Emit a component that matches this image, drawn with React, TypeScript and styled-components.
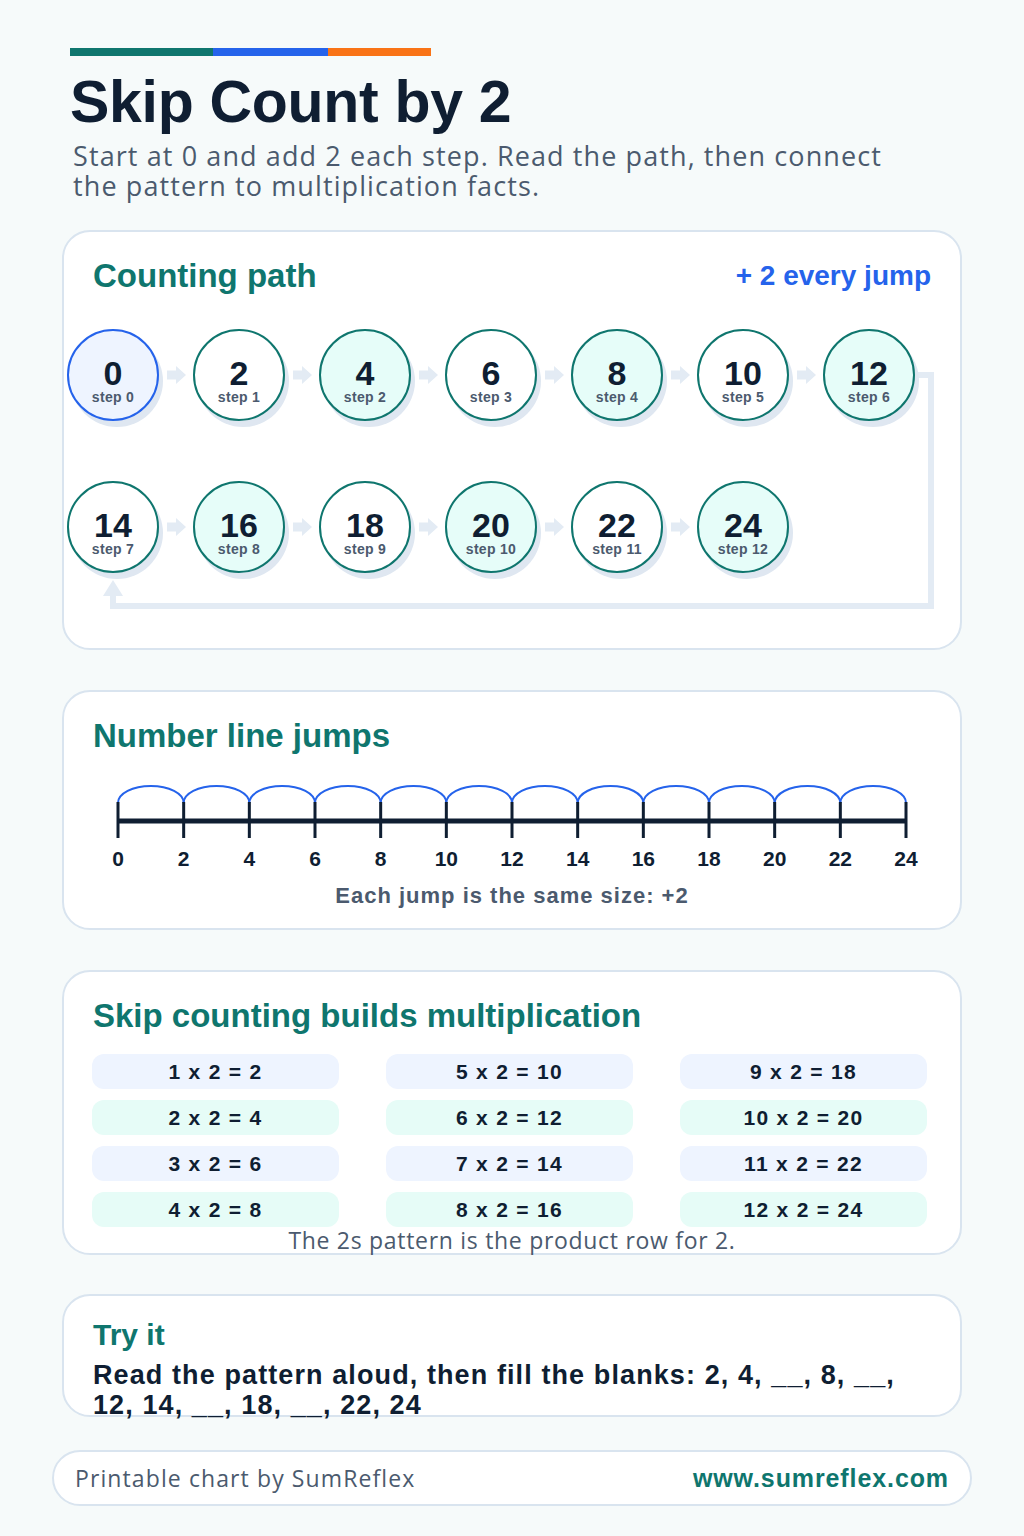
import React from "react";
import styled, { createGlobalStyle } from "styled-components";

const GlobalStyle = createGlobalStyle`
  html, body { margin: 0; padding: 0; background: #f6fafa; }
  body { font-family: "Liberation Sans", Arial, sans-serif; color: #0f1e32; }
  * { box-sizing: border-box; }
`;

const TEAL = "#0f766e";
const BLUE = "#2563eb";
const DARK = "#0f1e32";
const GRAY = "#4b5a6e";
const SOFT = "#e3ebf4";
const BORDER = "#d9e4ef";
const GEO = `"Open Sans", "Noto Sans", sans-serif`;

const Page = styled.div`
  width: 1024px;
  min-height: 1536px;
  padding: 48px 62px 30px;
  display: flex;
  flex-direction: column;
`;

const Header = styled.header`
  padding-left: 8px;
  display: flex;
  flex-direction: column;
`;

const ColorBar = styled.div`
  display: flex;
  height: 8px;
`;

const BarPart = styled.div<{ $w: number; $c: string }>`
  width: ${(p) => p.$w}px;
  background: ${(p) => p.$c};
`;

const Title = styled.h1`
  margin: 12px 0 0;
  font-family: "Liberation Sans", Arial, sans-serif;
  font-weight: 700;
  font-size: 59px;
  line-height: 68px;
  color: ${DARK};
  letter-spacing: -0.3px;
`;

const Subtitle = styled.p`
  margin: 5px 0 0 3px;
  width: 830px;
  font-family: ${GEO};
  font-size: 27px;
  letter-spacing: 1.1px;
  line-height: 30px;
  color: ${GRAY};
`;

const Card = styled.section<{ $h: number; $mt: number }>`
  margin-top: ${(p) => p.$mt}px;
  height: ${(p) => p.$h}px;
  background: #ffffff;
  border: 2px solid ${BORDER};
  border-radius: 28px;
  padding: 22px 0 0;
  display: flex;
  flex-direction: column;
`;

const CardHead = styled.div`
  display: flex;
  justify-content: space-between;
  align-items: center;
  padding: 0 29px;
  height: 44px;
`;

const CardTitle = styled.h2<{ $size?: number }>`
  margin: 0;
  font-family: "Liberation Sans", Arial, sans-serif;
  font-weight: 700;
  font-size: ${(p) => p.$size ?? 33}px;
  color: ${TEAL};
`;

const JumpNote = styled.span`
  font-weight: 700;
  font-size: 28px;
  color: ${BLUE};
`;

/* Counting path */
const PathArea = styled.div`
  position: relative;
  margin-top: 31px;
  padding-left: 3px;
  display: flex;
  flex-direction: column;
  gap: 60px;
`;

const PathLines = styled.svg`
  position: absolute;
  left: 0;
  top: 0;
  pointer-events: none;
`;

const CircleRow = styled.div`
  position: relative;
  display: flex;
  align-items: center;
`;

const Bubble = styled.div<{ $kind: "start" | "mint" | "plain" }>`
  width: 92px;
  height: 92px;
  flex: none;
  border-radius: 50%;
  border: 2px solid ${(p) => (p.$kind === "start" ? BLUE : TEAL)};
  background: ${(p) =>
    p.$kind === "start" ? "#eef4ff" : p.$kind === "mint" ? "#e6fdf9" : "#ffffff"};
  box-shadow: 4px 6px 0 #dfe7f1;
  display: flex;
  flex-direction: column;
  align-items: center;
  justify-content: center;
  padding-top: 10px;
`;

const BubbleNum = styled.span`
  font-weight: 700;
  font-size: 34px;
  line-height: 34px;
  color: ${DARK};
`;

const BubbleStep = styled.span`
  font-weight: 700;
  font-size: 14px;
  letter-spacing: 0.3px;
  line-height: 14px;
  color: ${GRAY};
`;

const ArrowSlot = styled.div`
  width: 34px;
  flex: none;
  display: flex;
  justify-content: center;
  align-items: center;
`;

/* Number line */
const LineWrap = styled.div`
  margin-top: 22px;
  display: flex;
  justify-content: flex-start;
`;

const Caption = styled.p<{ $geo?: boolean; $mt: number }>`
  margin: ${(p) => p.$mt}px 0 0;
  text-align: center;
  font-family: ${(p) => (p.$geo ? GEO : `"Liberation Sans", Arial, sans-serif`)};
  font-weight: ${(p) => (p.$geo ? 400 : 700)};
  font-size: ${(p) => (p.$geo ? 23 : 22)}px;
  letter-spacing: ${(p) => (p.$geo ? 0.7 : 1)}px;
  line-height: 26px;
  color: ${GRAY};
`;

/* Multiplication */
const FactGrid = styled.div`
  margin: 16px 33px 0 28px;
  display: grid;
  grid-template-columns: repeat(3, 247px);
  grid-auto-flow: column;
  grid-template-rows: repeat(4, 35px);
  column-gap: 47px;
  row-gap: 11px;
`;

const Fact = styled.div<{ $alt: boolean }>`
  border-radius: 12px;
  background: ${(p) => (p.$alt ? "#e6fcf7" : "#eef4ff")};
  display: flex;
  align-items: center;
  justify-content: center;
  font-weight: 700;
  font-size: 21px;
  letter-spacing: 1.3px;
  color: ${DARK};
`;

/* Try it */
const TryText = styled.p`
  margin: 8px 0 0;
  padding: 0 29px;
  font-weight: 700;
  font-size: 27px;
  letter-spacing: 1.1px;
  line-height: 30px;
  color: ${DARK};
`;

const Footer = styled.footer`
  margin: 33px -10px 0;
  height: 56px;
  border: 2px solid ${BORDER};
  border-radius: 28px;
  background: #ffffff;
  display: flex;
  align-items: center;
  justify-content: space-between;
  padding: 0 21px 0 21px;
`;

const FooterNote = styled.span`
  font-family: ${GEO};
  font-size: 23px;
  letter-spacing: 1.1px;
  color: ${GRAY};
`;

const FooterLink = styled.span`
  font-weight: 700;
  font-size: 25px;
  letter-spacing: 0.9px;
  color: ${TEAL};
`;

const StepArrow = () => (
  <svg width="20" height="20" viewBox="0 0 20 20">
    <rect x="1" y="5.5" width="10" height="9" fill={SOFT} />
    <polygon points="10,1 20,10 10,19" fill={SOFT} />
  </svg>
);

type Step = { n: number; i: number };
const steps: Step[] = Array.from({ length: 13 }, (_, i) => ({ n: i * 2, i }));

const kindOf = (i: number): "start" | "mint" | "plain" =>
  i === 0 ? "start" : i % 2 === 0 ? "mint" : "plain";

const Row = ({ items }: { items: Step[] }) => (
  <CircleRow>
    {items.map((s, k) => (
      <React.Fragment key={s.i}>
        {k > 0 && (
          <ArrowSlot>
            <StepArrow />
          </ArrowSlot>
        )}
        <Bubble $kind={kindOf(s.i)}>
          <BubbleNum>{s.n}</BubbleNum>
          <BubbleStep>step {s.i}</BubbleStep>
        </Bubble>
      </React.Fragment>
    ))}
  </CircleRow>
);

const NumberLine = () => {
  const x0 = 54;
  const step = (906 - 118) / 12;
  const ticks = Array.from({ length: 13 }, (_, i) => x0 + i * step);
  return (
    <svg width="896" height="100" viewBox="0 0 896 100">
      {ticks.slice(0, 12).map((x, i) => (
        <path
          key={`a${i}`}
          d={`M ${x} 23 A ${step / 2} 17 0 0 1 ${x + step} 23`}
          fill="none"
          stroke={BLUE}
          strokeWidth="2"
        />
      ))}
      <rect x={x0} y={38.5} width={step * 12} height={5} fill={DARK} />
      {ticks.map((x, i) => (
        <rect key={`t${i}`} x={x - 1.5} y={22} width={3} height={36} fill={DARK} />
      ))}
      {ticks.map((x, i) => (
        <text
          key={`l${i}`}
          x={x}
          y={86}
          textAnchor="middle"
          fontFamily='"Liberation Sans", Arial, sans-serif'
          fontWeight="700"
          fontSize="21"
          fill={DARK}
        >
          {i * 2}
        </text>
      ))}
    </svg>
  );
};

const facts = Array.from({ length: 12 }, (_, i) => i + 1);

export default function App() {
  return (
    <>
      <GlobalStyle />
      <Page>
        <Header>
          <ColorBar>
            <BarPart $w={143} $c={TEAL} />
            <BarPart $w={115} $c={BLUE} />
            <BarPart $w={103} $c="#f97316" />
          </ColorBar>
          <Title>Skip Count by 2</Title>
          <Subtitle>
            Start at 0 and add 2 each step. Read the path, then connect the pattern to
            multiplication facts.
          </Subtitle>
        </Header>

        <Card $h={420} $mt={29}>
          <CardHead>
            <CardTitle>Counting path</CardTitle>
            <JumpNote>+ 2 every jump</JumpNote>
          </CardHead>
          <PathArea>
            <PathLines width="896" height="290" viewBox="0 0 896 290">
              <polyline
                points="850,46 867,46 867,277 49,277 49,262"
                fill="none"
                stroke={SOFT}
                strokeWidth="6"
              />
              <polygon points="39,267 49,251 59,267" fill={SOFT} />
            </PathLines>
            <Row items={steps.slice(0, 7)} />
            <Row items={steps.slice(7)} />
          </PathArea>
        </Card>

        <Card $h={240} $mt={40}>
          <CardHead>
            <CardTitle>Number line jumps</CardTitle>
          </CardHead>
          <LineWrap>
            <NumberLine />
          </LineWrap>
          <Caption $mt={3}>Each jump is the same size: +2</Caption>
        </Card>

        <Card $h={285} $mt={40}>
          <CardHead>
            <CardTitle>Skip counting builds multiplication</CardTitle>
          </CardHead>
          <FactGrid>
            {facts.map((f) => (
              <Fact key={f} $alt={(f - 1) % 4 === 1 || (f - 1) % 4 === 3}>
                {f} x 2 = {f * 2}
              </Fact>
            ))}
          </FactGrid>
          <Caption $geo $mt={0}>
            The 2s pattern is the product row for 2.
          </Caption>
        </Card>

        <Card $h={123} $mt={39}>
          <CardHead>
            <CardTitle $size={30}>Try it</CardTitle>
          </CardHead>
          <TryText>
            Read the pattern aloud, then fill the blanks: 2, 4, __, 8, __, 12, 14, __, 18, __,
            22, 24
          </TryText>
        </Card>

        <Footer>
          <FooterNote>Printable chart by SumReflex</FooterNote>
          <FooterLink>www.sumreflex.com</FooterLink>
        </Footer>
      </Page>
    </>
  );
}
